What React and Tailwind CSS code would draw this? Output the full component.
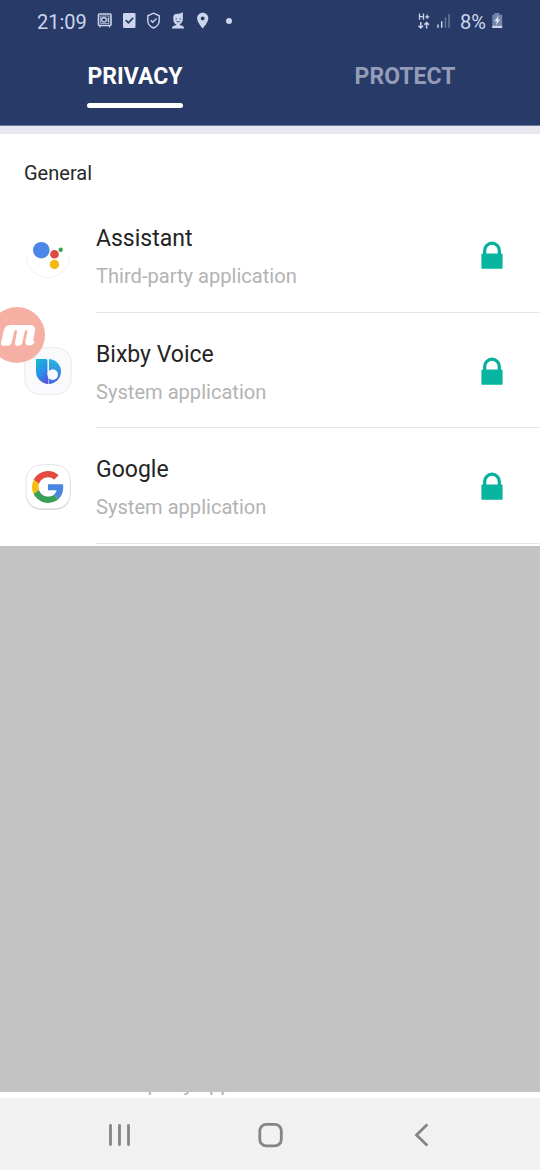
import React from "react";

function StatusBar() {
  return (
    <div className="flex h-[42px] items-center pl-[37px] text-[20px] leading-[24px] text-[#ccd5ec]">
      <span className="mt-px w-[50px] whitespace-nowrap">21:09</span>
      <svg className="ml-[10px] h-[18px] w-[134px] shrink-0" viewBox="97 12 134 18" fill="none" stroke="#ccd5ec">
        <rect x="98.5" y="14" width="12.5" height="11.5" rx="1" strokeWidth="1.6" />
        <rect x="100.7" y="16" width="8.2" height="7.5" strokeWidth=".7" />
        <circle cx="104" cy="19.8" r="2.3" strokeWidth="1.3" />
        <path d="M108.3 18v4M100 26v1.5M109.5 26v1.5" strokeWidth="1.2" />
        <rect x="123" y="13" width="12.5" height="15" rx="1.3" fill="#ccd5ec" stroke="none" />
        <path d="M125.7 20.2l2.7 2.7 4.7-5" stroke="#283a67" strokeWidth="1.7" />
        <path d="M153.5 13.2l5.7 2.6v4.6c0 3.5-2.3 6.2-5.7 7.6-3.4-1.4-5.7-4.1-5.7-7.6v-4.6z" strokeWidth="1.4" />
        <path d="M150.7 20.3l2 2 3.8-3.8" strokeWidth="1.3" />
        <path d="M173.3 17.7c0-3.4 2.2-4 4.8-4 1.8 0 2.8-.7 4.8-1.5v6.4c0 2.7-1.2 4.8-3 5.6v1c2.7.3 4.4 1.2 4.4 3.2h-12.4c0-2 1.6-2.9 4.3-3.2v-1c-1.8-.8-2.9-2.4-2.9-6.500z" fill="#ccd5ec" stroke="none" />
        <path d="M176.2 18.2v1.3M180.2 18.2v1.3M176.400 21.300q1.8 1.4 3.5 0" stroke="#283a67" strokeWidth=".9" />
        <path fillRule="evenodd" d="M202.700 12.800c-3.300 0-5.600 2.500-5.600 5.600 0 3.900 5.600 9.900 5.600 9.900s5.600-6 5.600-9.900c0-3.100-2.300-5.600-5.600-5.600zm0 3.700a1.900 1.900 0 1 1 0 3.800 1.900 1.900 0 0 1 0-3.800z" fill="#ccd5ec" stroke="none" />
      </svg>
      <span className="-ml-[5px] mb-px h-[6px] w-[6px] rounded-full bg-[#ccd5ec]" />
      <svg className="ml-[185px] h-[18px] w-[36px] shrink-0" viewBox="417 12 36 18" fill="none" stroke="#ccd5ec">
        <path d="M419.500 13.500v6.300M423.500 13.500v6.300M419.500 16.600h4M425.200 16.800h4M427.200 14.800v4" strokeWidth="1.300" />
        <path d="M420.800 22v6M418.500 25.700l2.300 2.300 2.300-2.300M426.600 28.500v-6M424.300 24.800l2.300-2.300 2.300 2.300" strokeWidth="1.500" />
        <path d="M438 24.500v3.200M441.700 21.300v6.400" strokeWidth="1.500" />
        <path d="M445.500 17.600v10.100M449 14v13.700" strokeWidth="1.500" opacity=".4" />
      </svg>
      <span className="ml-[7px] mt-px w-[27px] whitespace-nowrap">8%</span>
      <svg className="ml-[4px] h-[18px] w-[12px] shrink-0" viewBox="491 12 12 18">
        <path d="M494.500 13h5v1.800h2.700V28h-9.900V14.800h2.200z" fill="#7685ab" />
        <path d="M492.300 25.800h9.900V28h-9.900z" fill="#ccd5ec" />
        <path d="M498.700 15.500l-4.200 5.700h2.300l-.9 4 4.300-5.600h-2.300z" fill="#dce3f5" />
      </svg>
    </div>
  );
}

function Lock() {
  return (
    <svg className="h-[29px] w-[24px] shrink-0" viewBox="0 0 24 29">
      <path d="M4.700 15V9.500a7.300 7.300 0 0 1 14.600 0V15" fill="none" stroke="#07b09e" strokeWidth="3.300" />
      <rect x="1.400" y="12.500" width="21.200" height="15.300" rx="1" fill="#07b4a0" />
    </svg>
  );
}

function AssistantIcon() {
  return (
    <svg className="h-[48px] w-[48px]" viewBox="0 0 48 48">
      <path d="M2.500 24a21.500 21.500 0 0 0 43 0" fill="none" stroke="#f0f0f0" strokeWidth="1" />
      <circle cx="17.300" cy="18.200" r="8.300" fill="#4c87e8" />
      <circle cx="30.500" cy="22.200" r="4.300" fill="#db4b40" />
      <circle cx="30.500" cy="32.400" r="4.700" fill="#f4b914" />
      <circle cx="36.700" cy="17.700" r="2.200" fill="#3e9d5a" />
    </svg>
  );
}

function BixbyIcon() {
  return (
    <svg className="h-[48px] w-[48px]" viewBox="0 0 48 48">
      <defs>
        <linearGradient id="voiceStem" x1=".1" y1="0" x2=".7" y2="1">
          <stop stopColor="#18b9d0" />
          <stop offset=".5" stopColor="#2595e8" />
          <stop offset="1" stopColor="#5257dc" />
        </linearGradient>
        <linearGradient id="voiceBowl" x1="0" y1="0" x2="0" y2="1">
          <stop stopColor="#25b9df" />
          <stop offset="1" stopColor="#4566e4" />
        </linearGradient>
      </defs>
      <rect x=".7" y=".7" width="46.600" height="46.600" rx="15" fill="#fafafc" stroke="#ebebee" />
      <path d="M24.500 12a12.500 12.500 0 0 1 0 25z" fill="url(#voiceBowl)" />
      <path d="M12 12h9.500q2.500 0 2.500 2.500V37h.6A12.500 12.500 0 0 1 12 24.500z" fill="url(#voiceStem)" />
      <path d="M24.200 11.500v16" stroke="#fafafc" strokeWidth="1.500" />
      <circle cx="28.700" cy="27.600" r="5.300" fill="#fafafc" />
    </svg>
  );
}

function GoogleIcon() {
  return (
    <svg className="h-[48px] w-[48px]" viewBox="0 0 48 48">
      <rect x="2" y="2.800" width="44.300" height="44" rx="15" fill="#cecece" />
      <rect x="2" y="1.800" width="44.300" height="44" rx="15" fill="#fff" stroke="#dfdfdf" strokeWidth=".9" />
      <g transform="translate(8 8) scale(.665)">
        <path fill="#e34b3f" d="M24 9.500c3.540 0 6.710 1.220 9.210 3.600l6.850-6.850C35.900 2.380 30.470 0 24 0 14.620 0 6.510 5.380 2.560 13.220l7.980 6.190C12.430 13.720 17.740 9.500 24 9.500z" />
        <path fill="#4886df" d="M46.980 24.550c0-1.570-.15-3.090-.38-4.550H24v9.020h12.940c-.58 2.960-2.260 5.480-4.780 7.180l7.730 6c4.510-4.180 7.090-10.360 7.090-17.650z" />
        <path fill="#f8bd15" d="M10.530 28.590A14.500 14.500 0 0 1 10.530 19.410l-7.980-6.190a24 24 0 0 0 0 21.560z" />
        <path fill="#389f56" d="M24 48c6.480 0 11.930-2.130 15.890-5.810l-7.730-6c-2.150 1.450-4.920 2.300-8.160 2.300-6.260 0-11.570-4.220-13.470-9.910l-7.980 6.190C6.510 42.620 14.620 48 24 48z" />
      </g>
    </svg>
  );
}

function AppRow({ icon, name, kind }) {
  return (
    <div className="flex h-[115.500px] items-start pl-6">
      <div className="mt-[34.500px] h-[48px] w-[48px] shrink-0">{icon}</div>
      <div className="ml-6 flex h-full min-w-0 flex-1 items-start border-b border-[#e5e5e5]">
        <div className="flex-1 whitespace-nowrap pt-[28px]">
          <div className="text-[23px] leading-[28px] text-[#242424]">{name}</div>
          <div className="mt-[11px] text-[20.100px] leading-[24px] text-[#b3b3b3]">{kind}</div>
        </div>
        <div className="mr-[36px] mt-[44px]"><Lock /></div>
      </div>
    </div>
  );
}

export default function App() {
  return (
    <div className="relative flex h-[1170px] w-[540px] flex-col overflow-hidden bg-white font-['Roboto',sans-serif]">
      <header className="h-[126px] shrink-0 border-b border-[#6e7ba0] bg-[#283a67]">
        <StatusBar />
        <nav className="grid grid-cols-2 text-center text-[23px] font-bold leading-[28px]">
          <div className="flex flex-col items-center pt-[21px] text-white">
            <span>PRIVACY</span>
            <span className="mt-[11.500px] h-[5px] w-[96px] rounded-full bg-white" />
          </div>
          <div className="pt-[21px] text-[#949db7]">PROTECT</div>
        </nav>
      </header>
      <div className="h-[8px] shrink-0 bg-[#e8e9f0]" />
      <main className="h-[412px] shrink-0 overflow-hidden">
        <h2 className="h-[63px] pl-6 pt-[27px] text-[20px] font-normal leading-[24px] text-[#292929]">General</h2>
        <AppRow icon={<AssistantIcon />} name="Assistant" kind="Third-party application" />
        <AppRow icon={<BixbyIcon />} name="Bixby Voice" kind="System application" />
        <AppRow icon={<GoogleIcon />} name="Google" kind="System application" />
      </main>
      <div className="h-[546px] shrink-0 bg-[#c3c3c3]" />
      <div className="flex h-[6px] shrink-0 items-end overflow-hidden pl-24 text-[20.100px] leading-[24px] text-[#b0b0b0]">
        <span className="mb-[2px]">Third-party application</span>
      </div>
      <footer className="grid h-[72px] shrink-0 grid-cols-[240px_60px_240px] items-center bg-[#f1f1f1] pt-[2px]">
        <svg className="h-[26px] w-[26px] justify-self-center" viewBox="0 0 26 26" stroke="#858585" strokeWidth="2.800" strokeLinecap="round">
          <path d="M3.500 3.500v19M12.500 3.500v19M21.500 3.500v19" />
        </svg>
        <svg className="h-[26px] w-[26px] justify-self-center" viewBox="0 0 26 26" fill="none" stroke="#858585" strokeWidth="2.800">
          <rect x="2.800" y="2.400" width="21.500" height="21.500" rx="6.500" />
        </svg>
        <svg className="h-[26px] w-[26px] justify-self-center" viewBox="0 0 26 26" fill="none" stroke="#858585" strokeWidth="2.800">
          <path d="M19.500 3.200L9.500 13l10 9.800" strokeLinecap="round" />
        </svg>
      </footer>
      <div className="absolute -left-[11px] top-[307px] h-[56px] w-[56px] overflow-hidden rounded-full bg-[#f5afa3]">
        <svg className="h-[56px] w-[56px]" viewBox="-11 307 56 56">
          <path d="M10.500 325H30q6 0 5 6l-1.700 9q-.2 1.200 1 1.300v2q-2.500 2.500-6 2.300-3.300-.4-2.800-4.300l1.800-9.600q.3-1.700-1-1.700t-1.700 1.700l-2 10q-.7 4-4.200 4h-1.200q-2.700 0-2.200-3.300l2-10.600q.3-1.800-1.100-1.800t-1.800 1.600l-2.200 10.100q-.9 4-4.500 4H3.300q-3 0-2.200-3.200l2.500-11.500q1.200-6 6.900-6z" fill="#fff" />
        </svg>
      </div>
    </div>
  );
}
